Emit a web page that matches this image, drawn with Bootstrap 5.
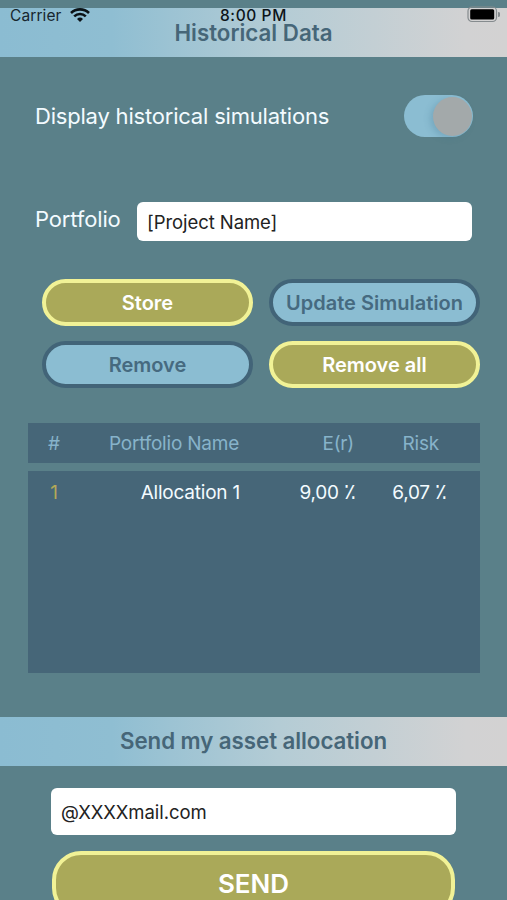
<!DOCTYPE html>
<html lang="en">
<head>
<meta charset="utf-8">
<meta name="viewport" content="width=device-width, initial-scale=1">
<title>Historical Data</title>
<link href="https://cdn.jsdelivr.net/npm/bootstrap@5.3.0/dist/css/bootstrap.min.css" rel="stylesheet">
<style>
  body { background: #5a8089; font-family: Inter, "Liberation Sans", sans-serif; color: #f3fbff; height: 900px; line-height: 1; }
  .screen { width: 507px; height: 900px; padding-top: 8px; }
  .status { top: 5px; height: 20px; left: 10px; right: 7px; color: #17262f; font-size: 15.5px; }
  .status .carrier { padding-top: 1px; letter-spacing: .1px; }
  .status .clock { left: 210px; padding-top: 1px; font-weight: 500; color: #0c1419; font-size: 15.5px; letter-spacing: .6px; }
  .band { height: 49px; color: #466678; font-weight: 560; font-size: 22.300px; background: linear-gradient(90deg, #8bbcd2 0%, #8fbed2 22%, #b4ccd5 55%, #d2d2d3 92%, #d3d2d2 100%); }
  .band-top { padding-top: 1px; }
  .band-send { margin-top: 44px; letter-spacing: -.05px; }
  .toggle-row { height: 42px; margin: 38px 34px 0 35px; font-size: 22px; letter-spacing: -.2px; }
  .toggle { width: 69px; height: 42px; background: #8bbdd2; padding: 2px 1px; }
  .knob { width: 39px; height: 39px; background: #a3a9aa; box-shadow: -3px 2px 6px rgba(60,110,140,.25); }
  .name-row { height: 39px; margin: 65px 35px 0 35px; font-size: 22px; }
  .name-label { width: 86px; letter-spacing: -.15px; padding-bottom: 6px; }
  .field { background: #fff; border: 0; border-radius: 6px; color: #222; font-size: 18.5px; padding: 0 10px; line-height: 1; letter-spacing: -.07px; }
  .actions { margin: 38px 27px 0 42px; gap: 15px 16px; display: grid; grid-template-columns: 211px 211px; }
  .pill { height: 47px; border-radius: 24px; font-size: 20px; font-weight: 600; padding: 0; line-height: 1; }
  .pill-gold, .pill-gold:hover { background: #aaa959; border: 4px solid #f1f296; color: #fff; }
  .pill-blue, .pill-blue:hover { background: #8bbdd2; border: 4px solid #426478; color: #466a80; }
  .grid-head, .grid-body { margin: 0 27px 0 28px; background: #466678; font-size: 19px; letter-spacing: -.22px; }
  .grid-head { margin-top: 35px; height: 40px; color: #87b3ca; }
  .grid-body { margin-top: 8px; height: 202px; }
  .grid-line { display: grid; grid-template-columns: 52px 160px 115px 91px; height: 41px; align-items: center; text-align: right; }
  .grid-body .grid-line { height: 43px; }
  .grid-line > :first-child { text-align: center; }
  .grid-head .grid-line > :nth-child(2), .grid-head .grid-line > :nth-child(3) { padding-right: 1px; }
  .grid-head .grid-line > :nth-child(4) { padding-right: 7px; }
  .pct { display: inline-block; width: 11px; height: 14px; line-height: 14px; font-size: 22px; font-weight: 300; text-align: center; vertical-align: baseline; }
  .num { color: #b3a858; }
  .mail { width: 405px; height: 47px; margin: 22px 0 0 51px; }
  .send { width: 403px; height: 66px; margin: 16px 0 0 52px; border-radius: 29px; font-size: 26px; }
</style>
<script src="https://cdn.jsdelivr.net/npm/bootstrap@5.3.0/dist/js/bootstrap.bundle.min.js"></script>
</head>
<body class="overflow-hidden">
<main class="screen position-relative overflow-hidden">
  <div class="status position-absolute d-flex align-items-center">
    <span class="carrier">Carrier</span>
    <svg class="ms-2" width="20" height="16" viewBox="0 0 20 16" fill="none" stroke="#0b1216" stroke-width="2.6"><path d="M1 6a13 13 0 0 1 18 0"/><path d="M4.2 9.4a8.3 8.3 0 0 1 11.6 0"/><path d="M7 11.9a4.6 4.6 0 0 1 6 0L10 15z" fill="#0b1216" stroke="none"/></svg>
    <span class="clock position-absolute">8:00 PM</span>
    <svg class="ms-auto" width="33" height="18" viewBox="0 0 33 18"><rect x="1" y="1" width="28.5" height="14.5" rx="4" fill="none" stroke="#858b8e" stroke-width="1.2"/><rect x="3.200" y="3.200" width="24" height="10.200" rx="1.500" fill="#000"/><path d="M31 6a2.500 2.500 0 0 1 0 5z" fill="#858b8e"/></svg>
  </div>
  <header class="band band-top d-flex align-items-center justify-content-center">Historical Data</header>
  <section class="toggle-row d-flex align-items-center justify-content-between">
    <span>Display historical simulations</span>
    <div class="toggle rounded-pill d-flex justify-content-end" role="switch" aria-checked="true"><span class="knob rounded-circle"></span></div>
  </section>
  <section class="name-row d-flex align-items-center">
    <label class="name-label" for="pname">Portfolio</label>
    <input id="pname" class="field flex-grow-1 h-100 ms-3" value="[Project Name]">
  </section>
  <section class="actions">
    <button class="btn pill pill-gold">Store</button>
    <button class="btn pill pill-blue">Update Simulation</button>
    <button class="btn pill pill-blue">Remove</button>
    <button class="btn pill pill-gold">Remove all</button>
  </section>
  <section>
    <div class="grid-head"><div class="grid-line"><span>#</span><span>Portfolio Name</span><span>E(r)</span><span>Risk</span></div></div>
    <div class="grid-body"><div class="grid-line"><span class="num">1</span><span>Allocation 1</span><span>9,00 <bdo class="pct" dir="ltr">٪</bdo></span><span>6,07 <bdo class="pct" dir="ltr">٪</bdo></span></div></div>
  </section>
  <section>
    <div class="band band-send d-flex align-items-center justify-content-center">Send my asset allocation</div>
    <input class="field mail d-block" value="@XXXXmail.com" aria-label="E-mail">
    <button class="btn pill pill-gold send d-block">SEND</button>
  </section>
</main>
</body>
</html>
